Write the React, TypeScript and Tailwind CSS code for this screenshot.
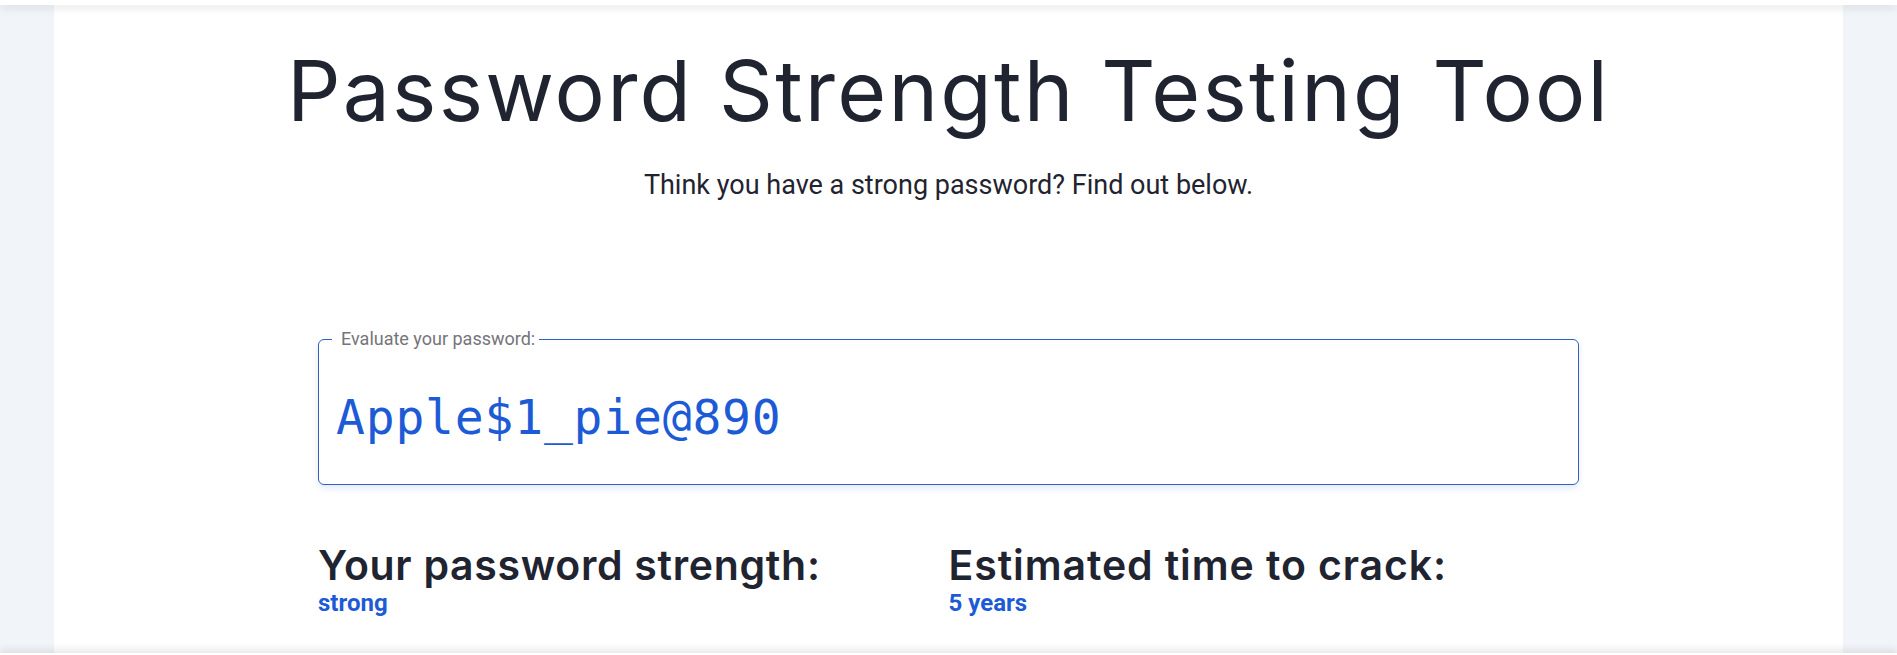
import React, { useState } from 'react';

const headingFont = { fontFamily: 'Inter, "Noto Sans", sans-serif' };

export default function App() {
  const [password, setPassword] = useState('Apple$1_pie@890');

  return (
    <div className="relative min-h-[655px] overflow-hidden bg-[#f1f5f9]">
      {/* top bar */}
      <div className="relative z-10 h-[5px] bg-white shadow-[0_3px_8px_rgba(0,0,0,0.12)]" />

      <main className="mx-auto flex h-[650px] w-[1789px] flex-col items-center bg-white">
        <h1
          className="mt-[44px] text-[84px] leading-none font-normal tracking-[2.2px] text-[#1f2430]"
          style={headingFont}
        >
          Password Strength Testing Tool
        </h1>
        <p className="mt-[39px] font-['Roboto',sans-serif] text-[27px] leading-none text-[#1f2430]">
          Think you have a strong password? Find out below.
        </p>

        <div className="mt-[131px] w-[1261px]">
          {/* Password field */}
          <fieldset className="h-[155px] rounded-md border border-[#2f62c0] px-[17px] shadow-[0_3px_6px_rgba(30,64,175,0.12)]">
            <legend className="-ml-[4px] pr-[4px] pl-[9px] font-['Roboto',sans-serif] text-[18px] leading-none text-[#75757a]">
              Evaluate your password:
            </legend>
            <input
              value={password}
              onChange={(e) => setPassword(e.target.value)}
              className="mt-[41px] w-full bg-transparent font-['DejaVu_Sans_Mono',monospace] text-[48px] leading-none tracking-[0.8px] text-[#1d5bd6] outline-none"
            />
          </fieldset>

          {/* Results */}
          <div className="mt-[60px] grid grid-cols-2">
            <div>
              <h2 className="text-[41px] leading-none font-semibold tracking-[0.7px] text-[#1f2430]" style={headingFont}>
                Your password strength:
              </h2>
              <div className="mt-[5px] font-['Roboto',sans-serif] text-[24px] leading-none font-bold text-[#1d5bd6]">strong</div>
            </div>
            <div>
              <h2 className="text-[41px] leading-none font-semibold tracking-[0.9px] text-[#1f2430]" style={headingFont}>
                Estimated time to crack:
              </h2>
              <div className="mt-[5px] font-['Roboto',sans-serif] text-[24px] leading-none font-bold text-[#1d5bd6]">5 years</div>
            </div>
          </div>
        </div>
      </main>

      {/* next section edge */}
      <div className="absolute bottom-[-40px] left-0 h-[42px] w-full bg-white shadow-[0_-3px_8px_rgba(0,0,0,0.1)]" />
    </div>
  );
}
